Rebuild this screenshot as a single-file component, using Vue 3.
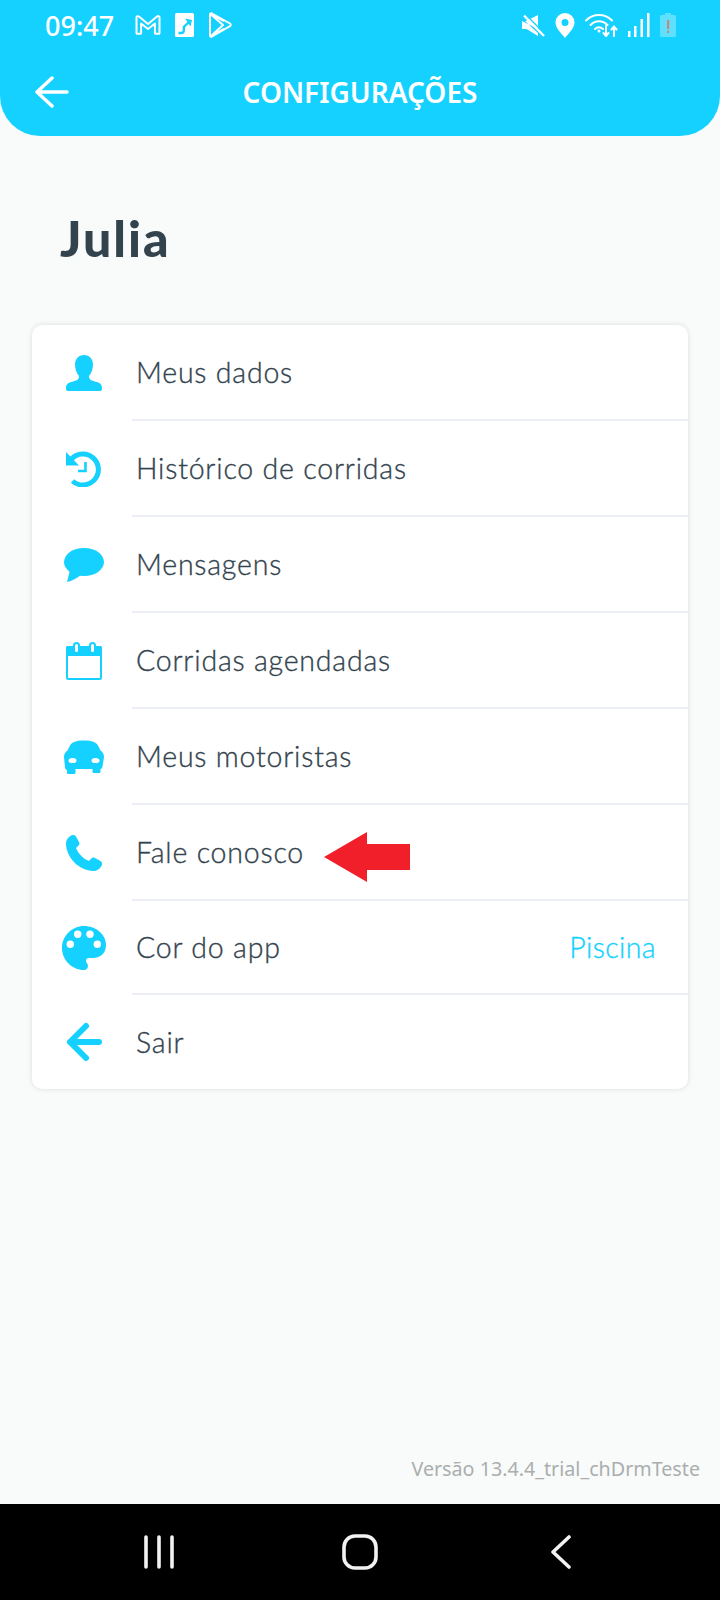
<template>
  <div class="screen">
    <header class="top">
      <div class="status">
        <span class="time">09:47</span>
        <div class="notifs">
          <svg width="26" height="20" viewBox="0 0 26 20" fill="none" stroke="#fff" stroke-width="2" stroke-linejoin="round">
            <path d="M1.500 2.500c0-1.300 1.500-1.700 2.400-1L13 9l9-7.500c1-.8 2.500-.2 2.500 1V18a.8.8 0 0 1-.8.8h-3a.8.8 0 0 1-.8-.8V8.500L13 14 6.100 8.500V18a.8.8 0 0 1-.8.8h-3a.8.8 0 0 1-.8-.8z" />
          </svg>
          <svg width="19" height="24" viewBox="0 0 19 24" fill="none">
            <rect width="19" height="24" rx="1.500" fill="#fff" />
            <path stroke="#14d1ff" stroke-width="2.400" d="M3.500 20H6c2 0 2.800-1 2.800-2.500V14L14 9" />
            <path fill="#14d1ff" d="M10 5.500 17 7l-1.500 6.500z" />
          </svg>
          <svg width="24" height="26" viewBox="0 0 24 26" fill="none" stroke="#fff" stroke-width="2" stroke-linejoin="round">
            <path d="M2 2.500c0-1 1-1.500 2-1l18 10c1 .6 1 2 0 2.600l-18 10.400c-1 .5-2 0-2-1z" />
            <path d="M2.500 2 15 13 2.500 24.500M3 24l13.500-7.500M3 2l13 7" />
          </svg>
        </div>
        <div class="sys">
          <svg width="23" height="23" viewBox="0 0 23 23">
            <path fill="#fff" d="M0 7h4L16 1v14zM0 7v8h4.500L16 22v-3L3 7z" />
            <path stroke="#14d1ff" stroke-width="1.400" d="M3.500 .5 23 20" />
            <path stroke="#fff" stroke-width="2.400" d="M2 1.500 22 22" />
          </svg>
          <svg width="20" height="25" viewBox="0 0 20 25">
            <path fill="#fff" fill-rule="evenodd" d="M10 0a9.500 9.500 0 0 1 9.500 9.500c0 5.500-5.500 10.500-9.500 15.500C6 20 .5 15 .5 9.500A9.500 9.500 0 0 1 10 0zm0 6a3.500 3.500 0 1 0 0 7 3.500 3.500 0 0 0 0-7z" />
          </svg>
          <svg width="33" height="24" viewBox="0 0 33 24" fill="none" stroke="#fff" stroke-width="2" stroke-linecap="round">
            <path d="M1 7.500c7-7.500 19-7.500 26 0M5.500 12c5-5 12-5 17 0M10 16c2.500-2.500 5.500-2.500 8 0" />
            <circle cx="14" cy="18" r="1.500" fill="#fff" stroke="none" />
            <path d="M21 13v9M18.500 20l2.500 3 2.500-3M29 23v-9M26.500 16.500 29 13.500l2.500 3" />
          </svg>
          <svg width="22" height="24" viewBox="0 0 22 24" fill="#fff">
            <rect x="0" y="18" width="2.500" height="6" />
            <rect x="6" y="13" width="2.500" height="11" />
            <rect x="12.500" y="6" width="2.500" height="18" />
            <rect x="19" y="0" width="2.500" height="24" />
          </svg>
          <svg width="16" height="24" viewBox="0 0 16 24">
            <path fill="#fff" fill-opacity=".32" d="M1.500 2H5V0h6v2h3.500A1.500 1.500 0 0 1 16 3.500v19a1.500 1.500 0 0 1-1.500 1.500h-13A1.500 1.500 0 0 1 0 22.500v-19A1.500 1.500 0 0 1 1.500 2z" />
            <rect x="7" y="7" width="2.200" height="9" fill="#c98a7c" />
            <rect x="7" y="17.500" width="2.200" height="2.500" fill="#c98a7c" />
          </svg>
        </div>
      </div>
      <div class="titlebar">
        <svg class="back" width="36" height="32" viewBox="0 0 36 32" fill="none" stroke="#fff" stroke-width="3.500" stroke-linecap="round" stroke-linejoin="round">
          <path d="M33 16H3M18 2 3 16l15 14" />
        </svg>
        <h1>CONFIGURAÇÕES</h1>
      </div>
    </header>

    <main class="content">
      <h2 class="name">Julia</h2>

      <ul class="card">
        <li v-for="item in items" :key="item.label" class="row">
          <span class="icon">
            <svg v-if="item.icon === 'user'" width="36" height="36" viewBox="0 0 36 36" fill="#14d1ff">
              <path d="M18 0c5.300 0 9 4 9 9.500 0 4.500-1.700 9-4 11.500 0 3.500 2 4.500 6 5.500 4 1 7 2 7 6.500v1c0 1.200-.8 2-2 2H2c-1.200 0-2-.8-2-2v-1c0-4.500 3-5.500 7-6.500 4-1 6-2 6-5.500-2.300-2.500-4-7-4-11.500C9 4 12.700 0 18 0z" />
            </svg>
            <svg v-else-if="item.icon === 'history'" width="36" height="36" viewBox="0 0 36 36" fill="none">
              <path stroke="#14d1ff" stroke-width="5" d="M6.500 30A15.500 15.500 0 1 0 5.500 8" />
              <path fill="#14d1ff" d="M0 1l13 13.500H0z" />
              <path stroke="#14d1ff" stroke-width="2.600" d="M19.500 11v9H12" />
            </svg>
            <svg v-else-if="item.icon === 'chat'" width="40" height="34" viewBox="0 0 40 34" fill="#14d1ff">
              <ellipse cx="20" cy="14" rx="20" ry="14" />
              <path d="M6 22 3 34c5-.8 10-4 14-7z" />
            </svg>
            <svg v-else-if="item.icon === 'calendar'" width="36" height="38" viewBox="0 0 36 38">
              <rect x="1" y="5" width="34" height="32" rx="1.500" fill="#fff" stroke="#14d1ff" stroke-width="2" />
              <rect y="4" width="36" height="10" rx="1.500" fill="#14d1ff" />
              <rect x="8" y="1" width="5" height="10" rx="2.500" fill="#fff" stroke="#14d1ff" stroke-width="2" />
              <rect x="24" y="1" width="5" height="10" rx="2.500" fill="#fff" stroke="#14d1ff" stroke-width="2" />
            </svg>
            <svg v-else-if="item.icon === 'car'" width="40" height="34" viewBox="0 0 40 34">
              <path fill="#14d1ff" d="M20 .5c8 0 12 1.500 14 5l2.500 5c2.200 1.500 3.500 3.500 3.500 6.500l-1.500 9.500c-.3 1.500-1 2.500-2 2.500v2.500c0 1-.7 1.500-1.500 1.500H30c-.8 0-1.500-.5-1.500-1.500V29h-17v3.500c0 1-.7 1.500-1.500 1.500H4.500C3.700 34 3 33.500 3 32.500V30c-1 0-1.700-1-2-2.500L0 17c0-3 1.300-5 3.500-6.500L6 5.500c2-3.500 6-5 14-5z" />
              <ellipse cx="8.500" cy="20.500" rx="4" ry="2.600" fill="#fff" />
              <ellipse cx="31.500" cy="20.500" rx="4" ry="2.600" fill="#fff" />
            </svg>
            <svg v-else-if="item.icon === 'phone'" width="36" height="36" viewBox="0 0 36 36" fill="#14d1ff">
              <path d="M5 .5C7 -.5 9 0 10 1.500l3 5.500c.8 1.500.4 2.700-.6 3.700L10 13c2 5.500 7.500 11 13 13l2.300-2.400c1-1 2.300-1.300 3.700-.6l5.500 3c1.500 1 2 3 1 5C33.500 34.500 30.500 36 27.500 36 13 36 0 22 0 8.500 0 5.500 1.500 2.500 5 .5z" />
            </svg>
            <svg v-else-if="item.icon === 'palette'" width="44" height="44" viewBox="0 0 44 44">
              <path fill="#14d1ff" d="M22 0c12 0 22 8.500 22 19 0 8-5.500 13-13 13h-4c-2 0-3 1.200-3 2.800 0 2 2 3 2 5.200 0 2.500-2 4-4 4C10 44 0 34 0 22S10 0 22 0z" />
              <circle cx="15.700" cy="8.300" r="3.700" fill="#fff" />
              <circle cx="28" cy="8.300" r="3.700" fill="#fff" />
              <circle cx="8.300" cy="18.300" r="3.700" fill="#fff" />
              <circle cx="35.300" cy="18.300" r="3.700" fill="#fff" />
            </svg>
            <svg v-else width="38" height="40" viewBox="0 0 38 40" fill="none" stroke="#14d1ff" stroke-width="6" stroke-linecap="round" stroke-linejoin="round">
              <path d="M34 20H5M21 4 5 20l16 16" />
            </svg>
          </span>
          <div class="row-body" :class="{ last: item.icon === 'exit', short: item.short }">
            <span class="label">{{ item.label }}</span>
            <span v-if="item.value" class="value">{{ item.value }}</span>
            <span v-if="item.pointer" class="pointer">
              <svg width="86" height="50" viewBox="0 0 86 50">
                <path fill="#f01f2a" d="M0 25 43 0v12h43v26H43v12z" />
              </svg>
            </span>
          </div>
        </li>
      </ul>

      <p class="version">Versão 13.4.4_trial_chDrmTeste</p>
    </main>

    <nav class="navbar">
      <svg class="nav-icon" width="32" height="34" viewBox="0 0 32 34" fill="none" stroke="#f2f2f2" stroke-width="3.600" stroke-linecap="round">
        <path d="M3 2v30M16 2v30M29 2v30" />
      </svg>
      <svg class="nav-icon" width="36" height="36" viewBox="0 0 36 36" fill="none" stroke="#f2f2f2" stroke-width="3.600">
        <rect x="2" y="2" width="32" height="32" rx="11" />
      </svg>
      <svg class="nav-icon" width="22" height="34" viewBox="0 0 22 34" fill="none" stroke="#f2f2f2" stroke-width="3.600" stroke-linecap="round" stroke-linejoin="round">
        <path d="M19 2 3 17l16 15" />
      </svg>
    </nav>
  </div>
</template>

<script setup>
const items = [
  { icon: 'user', label: 'Meus dados' },
  { icon: 'history', label: 'Histórico de corridas' },
  { icon: 'chat', label: 'Mensagens' },
  { icon: 'calendar', label: 'Corridas agendadas' },
  { icon: 'car', label: 'Meus motoristas' },
  { icon: 'phone', label: 'Fale conosco', pointer: true },
  { icon: 'palette', label: 'Cor do app', value: 'Piscina', short: true },
  { icon: 'exit', label: 'Sair' }
];
</script>

<style>
html,
body {
  margin: 0;
  background: #f9fbfa;
}
</style>

<style scoped>
.screen {
  display: flex;
  flex-direction: column;
  height: 1600px;
  width: 720px;
  overflow: hidden;
  background: #f9fbfa;
  font-family: 'Lato', 'Noto Sans', sans-serif;
}
.top {
  height: 136px;
  flex: none;
  background: #14d1ff;
  border-radius: 0 0 40px 40px;
  color: #fff;
}
.status {
  display: flex;
  align-items: center;
  height: 50px;
  padding: 0 44px 0 45px;
}
.time {
  font-family: 'Noto Sans', sans-serif;
  font-size: 27px;
  font-weight: 500;
  width: 90px;
}
.notifs {
  display: flex;
  align-items: center;
  gap: 14px;
}
.sys {
  display: flex;
  align-items: center;
  gap: 10px;
  margin-left: auto;
}
.titlebar {
  display: flex;
  align-items: center;
  justify-content: center;
  position: relative;
  height: 84px;
}
.back {
  position: absolute;
  left: 34px;
  top: 26px;
}
h1 {
  margin: 0;
  font-family: 'Noto Sans', sans-serif;
  font-size: 28px;
  font-weight: 600;
}
.content {
  flex: 1;
  display: flex;
  flex-direction: column;
  padding: 0 20px 0 32px;
}
.name {
  margin: 72px 0 0 28px;
  height: 117px;
  font-size: 50px;
  line-height: 60px;
  font-weight: 900;
  letter-spacing: 2px;
  color: #33434e;
}
.card {
  list-style: none;
  margin: 0;
  padding: 0;
  width: 656px;
  background: #fff;
  border-radius: 10px;
  box-shadow: 0 0 5px rgba(40, 60, 70, 0.16);
}
.row {
  display: flex;
}
.icon {
  flex: none;
  box-sizing: border-box;
  width: 100px;
  padding-left: 4px;
  display: flex;
  align-items: center;
  justify-content: center;
}
.row-body {
  flex: 1;
  display: flex;
  align-items: center;
  height: 94px;
  padding: 0 32px 0 4px;
  border-bottom: 2px solid #ebeff3;
}
.row-body.short {
  height: 92px;
}
.row-body.last {
  border-bottom: 0;
}
.label {
  font-size: 28.500px;
  font-weight: 300;
  letter-spacing: 0.800px;
  -webkit-text-stroke: 0.35px #33434e;
  color: #33434e;
}
.value {
  margin-left: auto;
  font-size: 28.500px;
  font-weight: 300;
  letter-spacing: 0.400px;
  -webkit-text-stroke: 0.35px #14d1ff;
  color: #14d1ff;
}
.pointer {
  display: flex;
  margin: 9px 0 0 20px;
}
.version {
  margin: auto 0 22px;
  text-align: right;
  font-family: 'Noto Sans', sans-serif;
  font-size: 19.700px;
  color: #aaaeae;
}
.navbar {
  flex: none;
  height: 96px;
  background: #000;
  display: grid;
  grid-template-columns: repeat(3, 201px);
  justify-content: center;
  align-items: center;
  justify-items: center;
}
</style>
